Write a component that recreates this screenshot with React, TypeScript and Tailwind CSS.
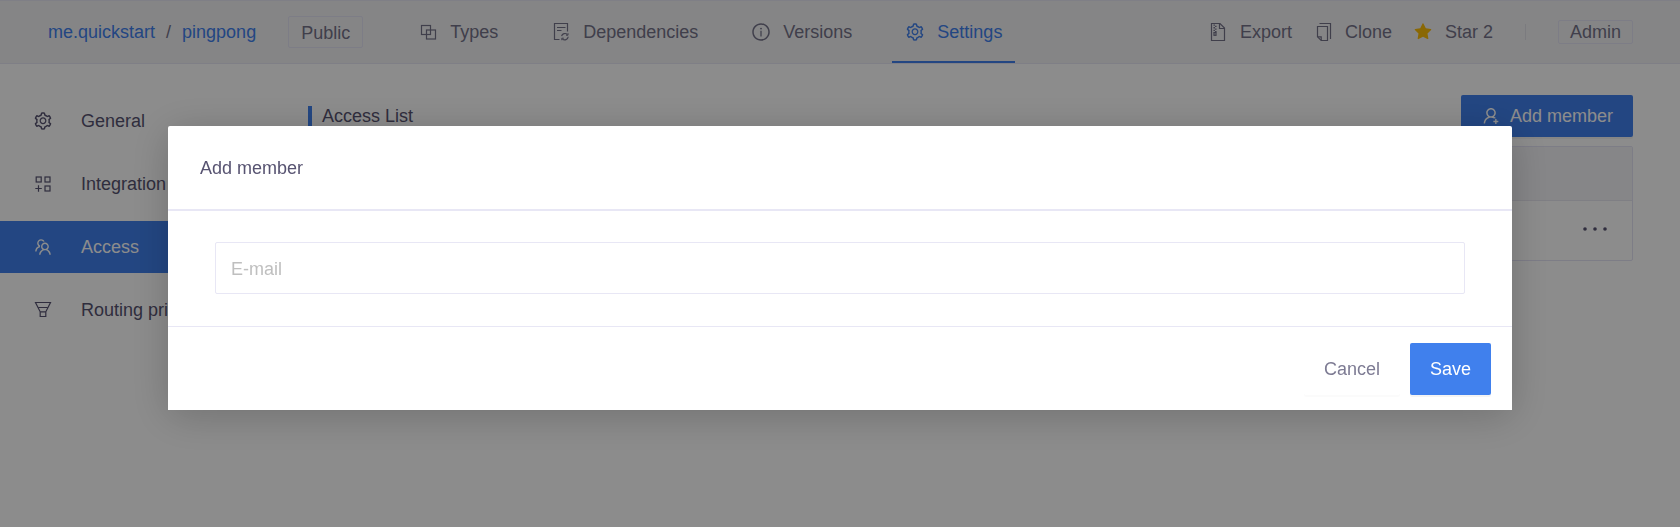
import React from "react";
import type { ComponentType, ReactNode } from "react";
import {
  AiFillStar,
  AiOutlineInfoCircle,
  AiOutlineSetting,
  AiOutlineTeam,
  AiOutlineUserAdd,
} from "react-icons/ai";

type IconProps = { size?: number; className?: string };
type Item = { label: string; icon: ComponentType<IconProps>; active?: boolean };

function Outline({ size = 20, className, children }: IconProps & { children: ReactNode }) {
  return (
    <svg
      width={size}
      height={size}
      viewBox="0 0 20 20"
      fill="none"
      stroke="currentColor"
      strokeWidth="1.2"
      className={className}
      aria-hidden="true"
    >
      {children}
    </svg>
  );
}

const BlocksIcon = (props: IconProps) => (
  <Outline {...props}>
    <rect x="3.5" y="3.5" width="9" height="9" />
    <rect x="8.5" y="8" width="9" height="9" />
  </Outline>
);

const FileSyncIcon = (props: IconProps) => (
  <Outline {...props}>
    <path d="M8.5 17.5H3.5V1.5H16.5V9.5" />
    <path d="M6 5.5H14.5M6 8.5H10.5" />
    <path d="M10.6 14.2A3.4 3.4 0 0 1 16.4 12.6M17.2 14.8A3.4 3.4 0 0 1 11.4 16.8" />
    <path d="M17 11.2V13.2H15M10.8 18.2V16.2H12.8" strokeWidth="1" />
  </Outline>
);

const FileZipIcon = (props: IconProps) => (
  <Outline {...props}>
    <path d="M3.5 1.5H12L16.5 6V18.5H3.5Z" />
    <path d="M11.5 1.8V6.5H16.2" />
    <path d="M6.2 2.5V10.5" strokeDasharray="1.3 1.3" strokeWidth="1.5" />
    <path d="M7.8 3.8V10.5" strokeDasharray="1.3 1.3" strokeWidth="1.5" />
    <rect x="6" y="10.5" width="2" height="2.8" />
  </Outline>
);

const CopyIcon = (props: IconProps) => (
  <Outline {...props}>
    <path d="M6.5 1.5H17.5V17" />
    <path d="M4.5 4.5H14.5V18.5H8.2L4.5 14.8Z" />
    <path d="M4.8 14.8H8.2V18.2" />
  </Outline>
);

const FilterIcon = (props: IconProps) => (
  <Outline {...props}>
    <path d="M2.5 2.5H17.5L12.8 11.8V16.5H7.2V11.8Z" />
    <path d="M5.2 7.5H14.8M7.2 11.8H12.8" />
  </Outline>
);

const AppsAddIcon = (props: IconProps) => (
  <Outline {...props}>
    <rect x="3.2" y="3" width="5" height="5" />
    <rect x="12" y="3" width="5" height="5" />
    <rect x="12" y="12" width="5" height="5" />
    <path d="M2.3 14.5H8.8M5.5 11.3V17.7" />
  </Outline>
);

const DotsIcon = () => (
  <svg width="26" height="20" viewBox="0 0 26 20" fill="currentColor" aria-hidden="true">
    <circle cx="3" cy="10" r="1.8" />
    <circle cx="13" cy="10" r="1.8" />
    <circle cx="23" cy="10" r="1.8" />
  </svg>
);

const tabs: Item[] = [
  { label: "Types", icon: BlocksIcon },
  { label: "Dependencies", icon: FileSyncIcon },
  { label: "Versions", icon: AiOutlineInfoCircle },
  { label: "Settings", icon: AiOutlineSetting, active: true },
];

const sections: Item[] = [
  { label: "General", icon: AiOutlineSetting },
  { label: "Integration", icon: AppsAddIcon },
  { label: "Access", icon: AiOutlineTeam, active: true },
  { label: "Routing principles", icon: FilterIcon },
];

function Header() {
  return (
    <header className="flex h-16 items-stretch border-y border-[#e8e7f5] bg-[#f2f2f5] pr-[47px] pl-12 text-[#757389]">
      <div className="flex items-center gap-[11px] text-[#4080ed]">
        <a href="#project">me.quickstart</a>
        <span className="text-[#757389]">/</span>
        <a href="#schema">pingpong</a>
      </div>
      <span className="ml-8 flex h-8 items-center self-center rounded-[2px] border border-[#e4e3f5] px-3 pt-0.5">
        Public
      </span>
      <nav className="ml-[42px] flex gap-[27px]">
        {tabs.map(({ label, icon: Icon, active }) => (
          <a
            key={label}
            href={`#${label.toLowerCase()}`}
            className={
              active
                ? "flex items-center gap-3 border-y-2 border-t-transparent border-b-[#4080ed] px-[13px] text-[#4080ed]"
                : "flex items-center gap-3 border-y-2 border-transparent px-[13px]"
            }
          >
            <Icon size={20} />
            {label}
          </a>
        ))}
      </nav>
      <div className="ml-auto flex items-center">
        <div className="flex gap-[21px]">
          <button type="button" className="flex items-center gap-3">
            <FileZipIcon size={20} />
            Export
          </button>
          <button type="button" className="flex items-center gap-3">
            <CopyIcon size={20} />
            Clone
          </button>
          <button type="button" className="flex items-center gap-3">
            <AiFillStar size={20} className="text-[#fbbd08]" />
            Star 2
          </button>
        </div>
        <span className="mx-8 h-4 w-px bg-[#e1e0e8]" />
        <span className="flex h-6 items-center rounded-[2px] border border-[#e4e3f5] px-[11px]">
          Admin
        </span>
      </div>
    </header>
  );
}

function Sidebar() {
  return (
    <nav className="flex w-[260px] shrink-0 flex-col gap-[11px] pt-[31px] text-[#575371]">
      {sections.map(({ label, icon: Icon, active }) => (
        <a
          key={label}
          href={`#${label.toLowerCase()}`}
          className={
            active
              ? "flex h-[52px] items-center gap-7 bg-[#4080ed] pl-[33px] text-white"
              : "flex h-[52px] items-center gap-7 pl-[33px]"
          }
        >
          <Icon size={20} className="shrink-0" />
          {label}
        </a>
      ))}
    </nav>
  );
}

function Dialog() {
  return (
    <div className="fixed inset-0 overflow-auto bg-black/45 pt-[126px]">
      <form
        role="dialog"
        aria-modal="true"
        aria-labelledby="dialog-title"
        className="mx-auto w-4/5 rounded-t-[2px] bg-white shadow-[0_6px_40px_rgba(0,0,0,0.2)]"
        onSubmit={(event) => event.preventDefault()}
      >
        <h2
          id="dialog-title"
          className="border-b-2 border-[#e8e7f5] px-8 pt-[29px] pb-[27px] text-[18px] leading-[27px] text-[#575371]"
        >
          Add member
        </h2>
        <div className="px-[47px] pt-[31px] pb-8">
          <input
            type="email"
            aria-label="E-mail"
            placeholder="E-mail"
            className="block h-[52px] w-full rounded-[2px] border border-[#e8e7f5] px-[15px] pt-0.5 text-[#575371] outline-none placeholder:text-[#bfbfbf]"
          />
        </div>
        <div className="flex justify-end gap-2.5 border-t border-[#e8e7f5] pt-4 pr-[21px] pb-[15px]">
          <button
            type="button"
            className="h-[52px] rounded-[2px] bg-white px-5 text-[#7d7b93] shadow-[0_2px_0_rgba(0,0,0,0.015)]"
          >
            Cancel
          </button>
          <button
            type="submit"
            className="h-[52px] rounded-[2px] bg-[#4080ed] px-5 text-white shadow-[0_2px_0_rgba(0,0,0,0.045)]"
          >
            Save
          </button>
        </div>
      </form>
    </div>
  );
}

export default function App() {
  return (
    <div className="min-h-screen bg-white font-['Liberation_Sans',Arial,sans-serif] text-[18px] leading-6">
      <Header />
      <div className="flex">
        <Sidebar />
        <main className="grow pt-[31px] pr-[47px] pl-12">
          <div className="flex h-[42px] items-center justify-between">
            <h1 className="border-l-4 border-[#4080ed] pl-2.5 leading-5 text-[#575371]">
              Access List
            </h1>
            <button
              type="button"
              className="flex h-[42px] items-center gap-[9px] rounded-[2px] bg-[#4080ed] px-5 text-white shadow-[0_2px_0_rgba(0,0,0,0.045)]"
            >
              <AiOutlineUserAdd size={20} />
              Add member
            </button>
          </div>
          <div className="mt-[9px] rounded-[2px] border border-[#e4e3f5]">
            <div className="h-[54px] border-b border-[#e8e7f0] bg-[#f4f4f7]" />
            <div className="flex h-[59px] items-center justify-end px-6 pb-1">
              <button type="button" aria-label="Actions" className="text-[#575371]">
                <DotsIcon />
              </button>
            </div>
          </div>
        </main>
      </div>
      <Dialog />
    </div>
  );
}
